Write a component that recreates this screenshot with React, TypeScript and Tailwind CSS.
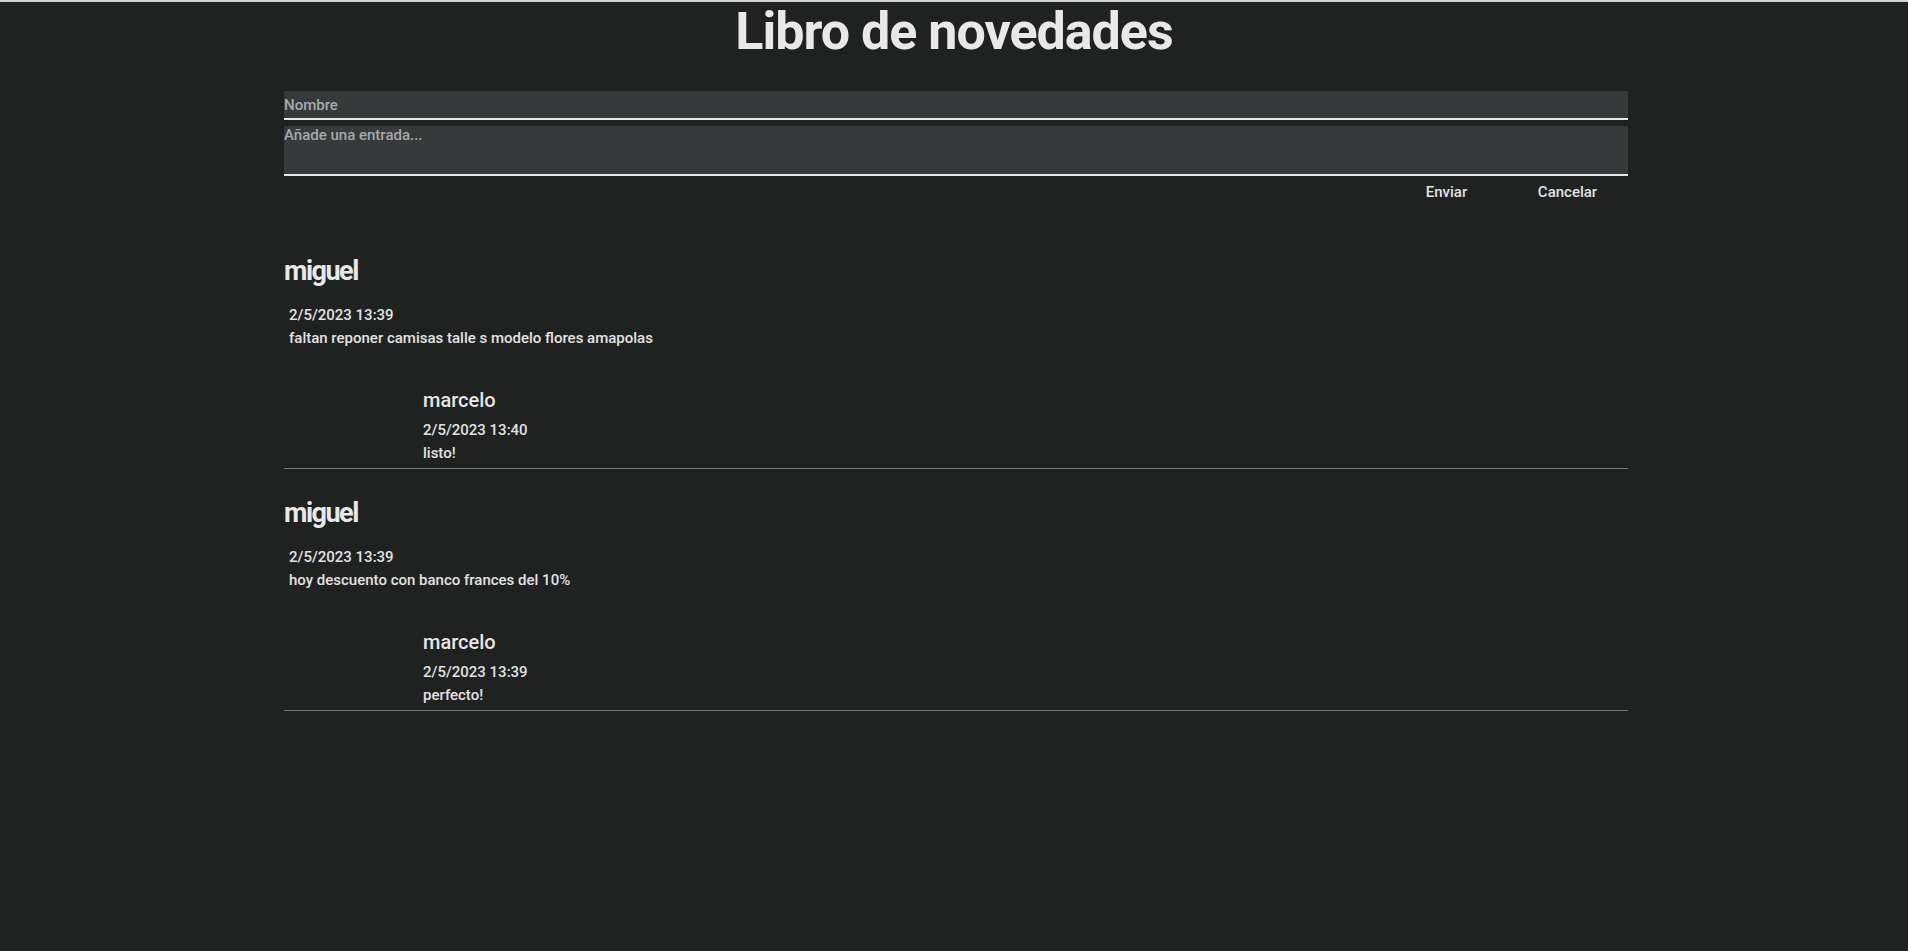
import React from "react"

type Reply = { author: string; date: string; text: string }
type Entry = { author: string; date: string; text: string; replies: Reply[] }

const entries: Entry[] = [
  {
    author: "miguel",
    date: "2/5/2023 13:39",
    text: "faltan reponer camisas talle s modelo flores amapolas",
    replies: [{ author: "marcelo", date: "2/5/2023 13:40", text: "listo!" }],
  },
  {
    author: "miguel",
    date: "2/5/2023 13:39",
    text: "hoy descuento con banco frances del 10%",
    replies: [{ author: "marcelo", date: "2/5/2023 13:39", text: "perfecto!" }],
  },
]

function EntryItem({ entry }: { entry: Entry }) {
  return (
    <div className="pt-[28px] border-b border-[#7a7a7a]">
      <h2 className="text-[27px] leading-[normal] font-bold tracking-[-1.5px] text-[#e8e8e8]">{entry.author}</h2>
      <div className="mt-[17px] pl-[5px] text-[15px] leading-[23px] font-medium text-[#e2e2e2]">
        <p>{entry.date}</p>
        <p>{entry.text}</p>
      </div>
      {entry.replies.map((r, i) => (
        <div key={i} className="mt-[38px] pl-[139px] pb-[3px]">
          <h3 className="text-[20px] leading-[normal] font-medium text-[#e6e6e6]">{r.author}</h3>
          <div className="mt-[7px] text-[15px] leading-[23px] font-medium text-[#e2e2e2]">
            <p>{r.date}</p>
            <p>{r.text}</p>
          </div>
        </div>
      ))}
    </div>
  )
}

export default function App() {
  return (
    <div className="min-h-screen bg-[#202121] font-['Roboto','Liberation_Sans',sans-serif]">
      <div className="h-[2px] bg-[#d6d6d6]" />
      <h1 className="mt-[4px] text-center text-[52px] leading-[52px] font-bold tracking-[-1px] text-[#e8e8e8]">
        Libro de novedades
      </h1>

      <div className="flex justify-center pl-[4px]">
        <div className="w-[1344px] mt-[33px]">
          {/* formulario */}
          <input
            type="text"
            placeholder="Nombre"
            className="block w-full h-[29px] p-0 bg-[#373a3b] border-b-2 border-[#e8e8e8] text-[15px] font-medium text-[#e2e2e2] placeholder:text-[#a5a9ac] outline-none"
          />
          <textarea
            placeholder="Añade una entrada..."
            className="block w-full h-[50px] mt-[6px] p-0 bg-[#373a3b] border-b-2 border-[#e8e8e8] text-[15px] leading-[normal] font-medium text-[#e2e2e2] placeholder:text-[#a5a9ac] outline-none resize-none"
          />
          <div className="flex justify-end">
            <button className="w-[121px] pt-[7px] pb-[6px] text-[15px] leading-[normal] font-medium text-[#e2e2e2]">Enviar</button>
            <button className="w-[121px] pt-[7px] pb-[6px] text-[15px] leading-[normal] font-medium text-[#e2e2e2]">Cancelar</button>
          </div>

          {/* lista de entradas */}
          <div className="mt-[20px]">
            {entries.map((e, i) => (
              <EntryItem key={i} entry={e} />
            ))}
          </div>
        </div>
      </div>
    </div>
  )
}
